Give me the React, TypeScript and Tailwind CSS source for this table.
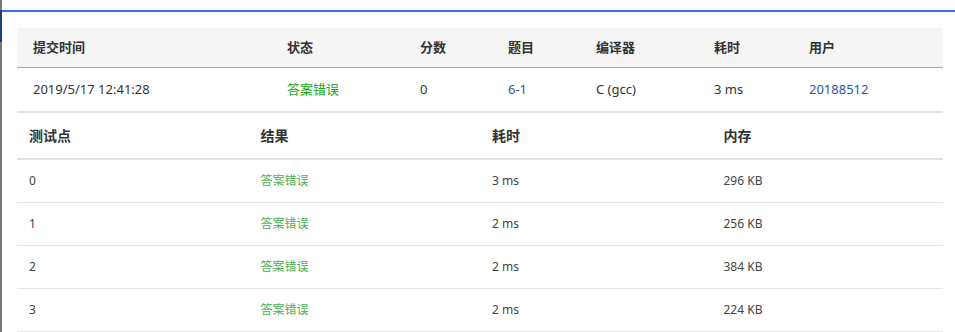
const submission = {
  time: "2019/5/17 12:41:28",
  status: "答案错误",
  score: "0",
  problem: "6-1",
  compiler: "C (gcc)",
  cost: "3 ms",
  user: "20188512",
};

const cases = [
  { id: "0", result: "答案错误", time: "3 ms", mem: "296 KB" },
  { id: "1", result: "答案错误", time: "2 ms", mem: "256 KB" },
  { id: "2", result: "答案错误", time: "2 ms", mem: "384 KB" },
  { id: "3", result: "答案错误", time: "2 ms", mem: "224 KB" },
];

const cols = "grid grid-cols-[254px_133px_88px_88px_118px_95px_1fr]";

export default function App() {
  return (
    <div
      className="flex h-[332px] w-[955px] overflow-hidden bg-white text-[#333]"
      style={{ fontFamily: '"Noto Sans", "Noto Sans CJK SC", sans-serif' }}
    >
      <div className="flex w-[2px] flex-col">
        <div className="h-[10px] bg-[#777]" />
        <div className="h-[32px] bg-[#1e3f78]" />
        <div className="flex-1 bg-[#777]" />
      </div>

      <div className="flex-1 pt-[10px]">
        <div className="h-[2px] bg-[#3b6dcc]" />

        <div className="ml-[15px] mr-[12px] mt-[16px]">
          {/* submission summary */}
          <div className={`${cols} h-[40px] items-center border-b border-[#aaa] bg-[#f5f5f5] text-[13px] font-semibold`}>
            <div className="pl-[16px]">提交时间</div>
            <div className="pl-[16px]">状态</div>
            <div className="pl-[16px]">分数</div>
            <div className="pl-[16px]">题目</div>
            <div className="pl-[16px]">编译器</div>
            <div className="pl-[16px]">耗时</div>
            <div className="pl-[16px]">用户</div>
          </div>
          <div className={`${cols} h-[45px] items-center border-b-2 border-[#dfe1e5] text-[13px]`}>
            <div className="pl-[16px]">{submission.time}</div>
            <div className="pl-[16px] text-[#14a814]">{submission.status}</div>
            <div className="pl-[16px]">{submission.score}</div>
            <div className="pl-[16px] text-[#1d5aa0]">{submission.problem}</div>
            <div className="pl-[16px]">{submission.compiler}</div>
            <div className="pl-[16px]">{submission.cost}</div>
            <div className="pl-[16px] text-[#1d5aa0]">{submission.user}</div>
          </div>

          {/* test points */}
          <div className="grid h-[47px] grid-cols-4 items-center border-b-2 border-[#dfe1e5] text-[14px] font-semibold">
            <div className="pl-[12px]">测试点</div>
            <div className="pl-[12px]">结果</div>
            <div className="pl-[12px]">耗时</div>
            <div className="pl-[12px]">内存</div>
          </div>
          {cases.map((c) => (
            <div
              key={c.id}
              className="grid h-[43px] grid-cols-4 items-center border-b border-[#e2e4e8] text-[12px] text-[#444]"
            >
              <div className="pl-[12px]">{c.id}</div>
              <div className="pl-[12px] text-[#4caf50]">{c.result}</div>
              <div className="pl-[12px]">{c.time}</div>
              <div className="pl-[12px]">{c.mem}</div>
            </div>
          ))}
        </div>
      </div>
    </div>
  );
}
